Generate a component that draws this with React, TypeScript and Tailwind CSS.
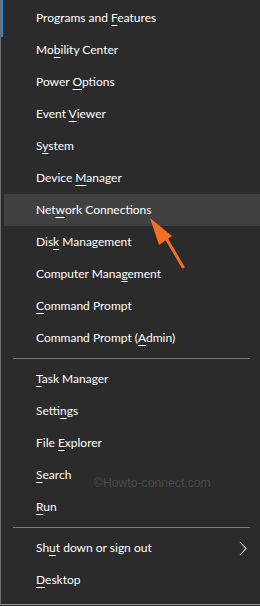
import React from 'react';

type Item = { pre: string; key: string; post: string; active?: boolean; sub?: boolean };

// Win+X menu groups, access key split out so it can be underlined
const GROUPS: Item[][] = [
  [
    { pre: 'Programs and ', key: 'F', post: 'eatures' },
    { pre: 'Mo', key: 'b', post: 'ility Center' },
    { pre: 'Power ', key: 'O', post: 'ptions' },
    { pre: 'Event ', key: 'V', post: 'iewer' },
    { pre: 'S', key: 'y', post: 'stem' },
    { pre: 'Device ', key: 'M', post: 'anager' },
    { pre: 'Net', key: 'w', post: 'ork Connections', active: true },
    { pre: 'Dis', key: 'k', post: ' Management' },
    { pre: 'Computer Mana', key: 'g', post: 'ement' },
    { pre: '', key: 'C', post: 'ommand Prompt' },
    { pre: 'Command Prompt (', key: 'A', post: 'dmin)' },
  ],
  [
    { pre: '', key: 'T', post: 'ask Manager' },
    { pre: 'Setti', key: 'n', post: 'gs' },
    { pre: 'File ', key: 'E', post: 'xplorer' },
    { pre: '', key: 'S', post: 'earch' },
    { pre: '', key: 'R', post: 'un' },
  ],
  [
    { pre: 'Sh', key: 'u', post: 't down or sign out', sub: true },
    { pre: '', key: 'D', post: 'esktop' },
  ],
];

const Row: React.FC<{ item: Item }> = ({ item }) => (
  <div
    className={`flex h-8 items-center justify-between pl-8 pr-3 ${item.active ? 'bg-[#414141]' : ''}`}
  >
    <span className="leading-4">
      {item.pre}
      <u className="decoration-1 underline-offset-[3px]">{item.key}</u>
      {item.post}
    </span>
    {item.sub && (
      <svg width="8" height="15" viewBox="0 0 8 15" fill="none" className="mr-[1px]">
        <path d="M1 1 L7 7.5 L1 14" stroke="#d8d8d8" strokeWidth="1.1" />
      </svg>
    )}
  </div>
);

export default function App() {
  return (
    <div className="relative h-[606px] w-[260px] overflow-hidden bg-[#2b2b2b] font-['Lato',sans-serif] text-[12px] text-white">
      <div className="flex h-[605px] flex-col border-b border-l border-b-[#9a9a9a] border-l-[#6e6e6e] pt-[2px] pl-[3px]">
        {GROUPS.map((group, gi) => (
          <div key={gi}>
            {gi > 0 && <div className="my-1 ml-[9px] mr-[10px] h-px bg-[#7c7c7c]" />}
            {group.map((item, i) => (
              <Row key={i} item={item} />
            ))}
          </div>
        ))}
      </div>

      {/* accent strip on the left edge */}
      <div className="absolute left-[1px] top-0 h-[37px] w-[2px] bg-[#1e88d8]" />

      {/* annotation arrow */}
      <svg className="absolute left-0 top-0" width="260" height="606" viewBox="0 0 260 606">
        <line x1="166" y1="238" x2="183" y2="267" stroke="#f36f21" strokeWidth="3" strokeLinecap="round" />
        <polygon points="150,218 172,236 159,245" fill="#f36f21" />
      </svg>

      {/* watermark */}
      <div className="absolute left-[94px] top-[475px] font-['Liberation_Sans',sans-serif] text-[12.2px] leading-4 text-[#4a4a4a]">
        ©Howto-connect.com
      </div>
    </div>
  );
}
